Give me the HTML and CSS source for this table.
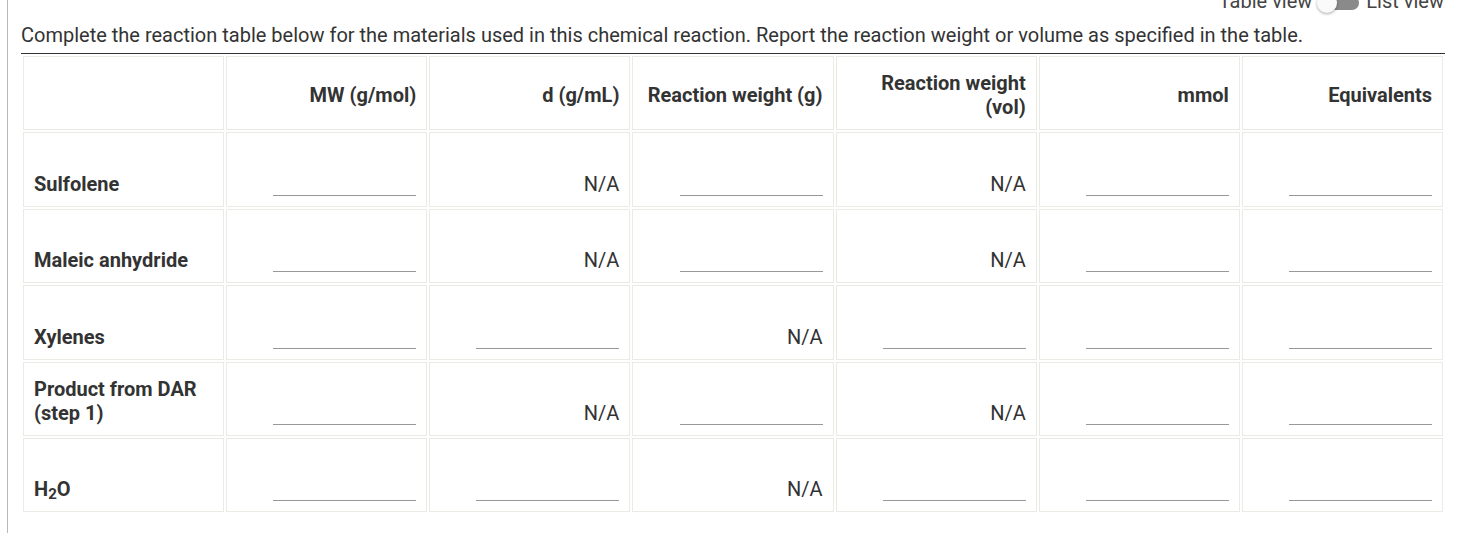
FILE: index.html
```html
<!DOCTYPE html>
<html lang="en">
<head>
<meta charset="utf-8">
<title>Reaction table</title>
<link rel="stylesheet" href="styles.css">
</head>
<body>
<div class="page">
  <div class="view-toggle">
    <span class="view-label">Table view</span>
    <span class="switch"><span class="switch-track"></span><span class="switch-thumb"></span></span>
    <span class="view-label">List view</span>
  </div>
  <p class="instructions">Complete the reaction table below for the materials used in this chemical reaction. Report the reaction weight or volume as specified in the table.</p>
  <table class="rt">
    <thead>
      <tr>
        <th></th>
        <th>MW (g/mol)</th>
        <th>d (g/mL)</th>
        <th>Reaction weight (g)</th>
        <th>Reaction weight (vol)</th>
        <th>mmol</th>
        <th>Equivalents</th>
      </tr>
    </thead>
    <tbody>
      <tr>
        <td class="name">Sulfolene</td>
        <td><span class="blank"></span></td>
        <td class="na">N/A</td>
        <td><span class="blank"></span></td>
        <td class="na">N/A</td>
        <td><span class="blank"></span></td>
        <td><span class="blank"></span></td>
      </tr>
      <tr>
        <td class="name">Maleic anhydride</td>
        <td><span class="blank"></span></td>
        <td class="na">N/A</td>
        <td><span class="blank"></span></td>
        <td class="na">N/A</td>
        <td><span class="blank"></span></td>
        <td><span class="blank"></span></td>
      </tr>
      <tr>
        <td class="name">Xylenes</td>
        <td><span class="blank"></span></td>
        <td><span class="blank"></span></td>
        <td class="na">N/A</td>
        <td><span class="blank"></span></td>
        <td><span class="blank"></span></td>
        <td><span class="blank"></span></td>
      </tr>
      <tr>
        <td class="name">Product from DAR (step 1)</td>
        <td><span class="blank"></span></td>
        <td class="na">N/A</td>
        <td><span class="blank"></span></td>
        <td class="na">N/A</td>
        <td><span class="blank"></span></td>
        <td><span class="blank"></span></td>
      </tr>
      <tr>
        <td class="name">H<sub>2</sub>O</td>
        <td><span class="blank"></span></td>
        <td><span class="blank"></span></td>
        <td class="na">N/A</td>
        <td><span class="blank"></span></td>
        <td><span class="blank"></span></td>
        <td><span class="blank"></span></td>
      </tr>
    </tbody>
  </table>
</div>
</body>
</html>
```
FILE: styles.css
```css
html, body {
  margin: 0;
  padding: 0;
  background: #fff;
}

body {
  font-family: Roboto, "Liberation Sans", Arial, sans-serif;
  font-size: 20px;
  line-height: 24px;
  color: #333;
}

.page {
  display: flow-root;
  margin-left: 7px;
  border-left: 1px solid #b5babd;
  padding: 0 12px 0 13px;
  min-height: 100vh;
  box-sizing: border-box;
}

.view-toggle {
  display: flex;
  justify-content: flex-end;
  align-items: center;
  margin-top: -11px;
  padding-right: 1px;
  color: #444;
}

.switch {
  position: relative;
  width: 42px;
  height: 24px;
  margin: 0 7px 0 5px;
}

.switch-track {
  position: absolute;
  left: 6px;
  right: 0;
  top: 7px;
  height: 14px;
  border-radius: 7px;
  background: #8a8a8a;
}

.switch-thumb {
  position: absolute;
  left: 0;
  top: 4px;
  width: 20px;
  height: 20px;
  border-radius: 50%;
  background: #fafafa;
  box-shadow: 0 1px 3px rgba(0, 0, 0, 0.35);
}

.instructions {
  margin: 10px 0 0;
  padding-bottom: 6px;
  border-bottom: 1px solid #333;
}

.rt {
  width: 100%;
  table-layout: fixed;
  border-collapse: separate;
  border-spacing: 2px;
}

.rt th,
.rt td {
  box-sizing: border-box;
  height: 74.4px;
  border: 1px solid #ebebe6;
  padding: 0 10px;
  text-align: right;
}

.rt th {
  font-weight: 700;
  vertical-align: middle;
  padding-top: 4px;
}

.rt td {
  vertical-align: bottom;
  padding-bottom: 10px;
}

.rt td.name {
  text-align: left;
  font-weight: 700;
}

.rt td.na {
  font-weight: 400;
}

.blank {
  display: block;
  width: 143px;
  height: 24px;
  margin-left: auto;
  box-sizing: border-box;
  border-bottom: 1px solid #999;
}

sub {
  font-size: 0.75em;
  line-height: 0;
  vertical-align: -0.2em;
}
```
